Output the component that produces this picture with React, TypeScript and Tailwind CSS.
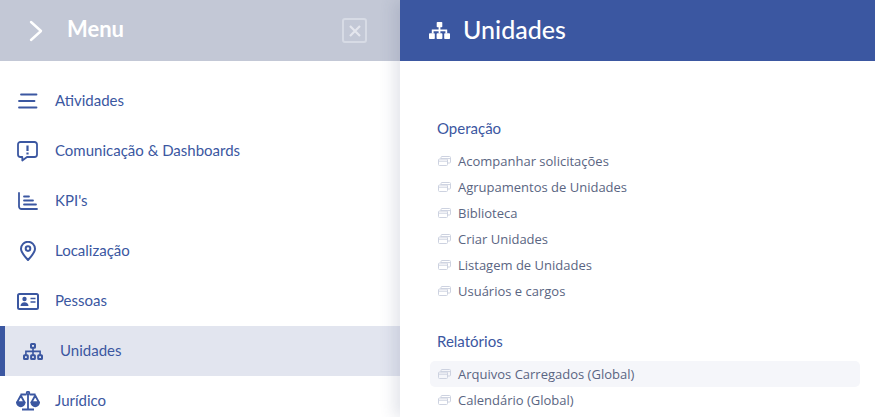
import React from 'react';

const BLUE = '#3b57a1';

const Hierarchy = ({ className }: { className: string }) => (
  <svg viewBox="0 0 20 17" className={className} fill="none" stroke="currentColor" strokeWidth="2">
    <rect x="8" y="1" width="4" height="3.800" rx="0.600" />
    <rect x="1" y="12.200" width="3.800" height="3.800" rx="0.600" />
    <rect x="8.100" y="12.200" width="3.800" height="3.800" rx="0.600" />
    <rect x="15.200" y="12.200" width="3.800" height="3.800" rx="0.600" />
    <path d="M10 4.800V12.200M2.900 12.200V8.400H17.100V12.200" strokeWidth="1.600" />
  </svg>
);

const HierarchySolid = ({ className }: { className: string }) => (
  <svg viewBox="0 0 21 17" className={className} fill="currentColor">
    <rect x="7.700" y="0" width="5.600" height="5.200" rx="0.800" />
    <rect x="0" y="11.300" width="5.800" height="5.700" rx="0.800" />
    <rect x="7.600" y="11.300" width="5.800" height="5.700" rx="0.800" />
    <rect x="15.200" y="11.300" width="5.800" height="5.700" rx="0.800" />
    <path d="M9.600 5h1.800v2.600h6.800v3.900h-1.800V9.300h-5v2.200H9.600V9.300h-5v2.200H2.800V7.600h6.800z" />
  </svg>
);

const ListIcon = () => (
  <svg viewBox="0 0 20 16" className="w-[20px] h-[16px]" fill="none" stroke="currentColor" strokeWidth="1.800" strokeLinecap="round">
    <path d="M3 1.500H18.500M1 8H16.500M1 14.500H18.500" />
  </svg>
);

const AlertIcon = () => (
  <svg viewBox="0 0 21 21" className="w-[21px] h-[21px]" fill="none" stroke="currentColor">
    <path d="M3.500 1h14A2.500 2.500 0 0 1 20 3.500v10a2.500 2.500 0 0 1-2.500 2.500H10l-4.700 3.500V16H3.500A2.500 2.500 0 0 1 1 13.500v-10A2.500 2.500 0 0 1 3.500 1z" strokeWidth="1.800" strokeLinejoin="round" />
    <path d="M10.500 4.500V10" strokeWidth="2.200" />
    <path d="M10.500 11.500V13.500" strokeWidth="2.200" />
  </svg>
);

const ChartIcon = () => (
  <svg viewBox="0 0 20 18" className="w-[20px] h-[18px]" fill="none" stroke="currentColor" strokeWidth="1.800" strokeLinecap="round">
    <path d="M1 1v13.500A2.500 2.500 0 0 0 3.500 17H19" />
    <path d="M6 4.500H11M6 8.500H15M6 12.500H18" />
  </svg>
);

const PinIcon = () => (
  <svg viewBox="0 0 16 20" className="w-[16px] h-[20px]" fill="none" stroke="currentColor" strokeWidth="2">
    <path d="M8 19C4 14.800 1 11.500 1 7.800A7 7 0 0 1 15 7.800C15 11.500 12 14.800 8 19z" strokeLinejoin="round" />
    <circle cx="8" cy="7.600" r="2.300" />
  </svg>
);

const CardIcon = () => (
  <svg viewBox="0 0 22 17" className="w-[22px] h-[17px]" fill="none" stroke="currentColor">
    <rect x="1" y="1" width="20" height="15" rx="1.500" strokeWidth="2" />
    <circle cx="7.500" cy="6" r="2.200" fill="currentColor" stroke="none" />
    <path d="M3.500 13c0-2.500 1.800-3.800 4-3.800s4 1.300 4 3.800z" fill="currentColor" stroke="none" />
    <path d="M13.500 5.500H18.500M13.500 9H18.500" strokeWidth="1.500" />
  </svg>
);

const ScaleIcon = () => (
  <svg viewBox="0 0 24 20" className="w-[24px] h-[20px]" fill="none" stroke="currentColor" strokeWidth="1.800" strokeLinejoin="round">
    <circle cx="12" cy="2" r="1.300" />
    <path d="M12 3.500V18M6 18.500H18M4.500 3.500H10.500M13.500 3.500H19.500" />
    <path d="M4.800 4.500L1 11.500H8.600z" />
    <path d="M19.200 4.500L15.400 11.500H23z" />
    <path d="M1 11.500A3.800 3.800 0 0 0 8.600 11.500zM15.400 11.500A3.800 3.800 0 0 0 23 11.500z" fill="currentColor" />
  </svg>
);

const WindowsIcon = () => (
  <svg viewBox="0 0 13 10" className="w-[13px] h-[10px] shrink-0 text-[#cdd2e0]" fill="none" stroke="currentColor" strokeWidth="1">
    <rect x="0.500" y="3" width="9" height="6.500" rx="1" />
    <path d="M0.500 5.200H9.500" />
    <path d="M3 3V1.500A1 1 0 0 1 4 0.500H11.500A1 1 0 0 1 12.500 1.500V6A1 1 0 0 1 11.500 7H9.500M3 2.600H12.500" />
  </svg>
);

const MENU: { label: string; icon: React.ReactNode; active?: boolean }[] = [
  { label: 'Atividades', icon: <ListIcon /> },
  { label: 'Comunicação & Dashboards', icon: <AlertIcon /> },
  { label: "KPI's", icon: <ChartIcon /> },
  { label: 'Localização', icon: <PinIcon /> },
  { label: 'Pessoas', icon: <CardIcon /> },
  { label: 'Unidades', icon: <Hierarchy className="w-[20px] h-[17px]" />, active: true },
  { label: 'Jurídico', icon: <ScaleIcon /> },
];

const SECTIONS = [
  {
    title: 'Operação',
    items: ['Acompanhar solicitações', 'Agrupamentos de Unidades', 'Biblioteca', 'Criar Unidades', 'Listagem de Unidades', 'Usuários e cargos'],
  },
  {
    title: 'Relatórios',
    items: ['Arquivos Carregados (Global)', 'Calendário (Global)'],
  },
];

const App: React.FC = () => {
  return (
    <div className="flex w-[875px] h-[417px] overflow-hidden bg-white">
      {/* Menu lateral */}
      <aside className="w-[400px] shrink-0 font-['Lato',sans-serif]">
        <header className="h-[61px] bg-[#c3c8d6] flex items-center text-white">
          <svg viewBox="0 0 14 22" className="w-[14px] h-[22px] ml-[29px]" fill="none" stroke="currentColor" strokeWidth="2.400" strokeLinecap="round" strokeLinejoin="round">
            <path d="M2 2L12 11L2 20" />
          </svg>
          <span className="ml-[24px] text-[22px] font-bold leading-none pb-[3px]">Menu</span>
          <div className="ml-auto mr-[33px] w-[25px] h-[25px] rounded-[3px] border-2 border-[#d7dbe5] flex items-center justify-center text-[#e4e6ed]">
            <svg viewBox="0 0 12 12" className="w-[12px] h-[12px]" fill="none" stroke="currentColor" strokeWidth="2.200">
              <path d="M1 1L11 11M11 1L1 11" />
            </svg>
          </div>
        </header>
        <nav className="pt-[15px]">
          {MENU.map(item => (
            <div
              key={item.label}
              className={`h-[50px] flex items-center text-[15px] font-normal text-[#3b57a1] ${item.active ? 'bg-[#e2e5ef] border-l-[5px] border-[#3b57a1]' : ''}`}
            >
              <div className="flex justify-center w-[55px]">{item.icon}</div>
              <span className="pb-[2px]">{item.label}</span>
            </div>
          ))}
        </nav>
      </aside>

      {/* Painel de Unidades */}
      <main className="relative z-10 flex-1 shadow-[-6px_0_14px_rgba(60,70,110,0.14)] bg-white">
        <header className="h-[61px] flex items-center text-white" style={{ backgroundColor: BLUE }}>
          <HierarchySolid className="w-[21px] h-[17px] ml-[29px]" />
          <span className="ml-[13px] text-[25px] font-['Lato',sans-serif] font-medium leading-none pb-[3px]">Unidades</span>
        </header>
        <div className="pt-[55px] px-[30px] pr-[15px]">
          {SECTIONS.map((section, idx) => (
            <section key={section.title} className={idx > 0 ? 'mt-[25px]' : ''}>
              <h3 className="pl-[7px] h-[26px] pb-[2px] flex items-center text-[15px] font-normal font-['Lato',sans-serif] text-[#3b57a1]">{section.title}</h3>
              <ul className="mt-[6px]">
                {section.items.map(name => (
                  <li
                    key={name}
                    className={`h-[26px] rounded-[5px] pl-[8px] flex items-center gap-[7px] text-[13px] font-['Open_Sans',sans-serif] text-[#5a6582] ${name === 'Arquivos Carregados (Global)' ? 'bg-[#f5f6fa]' : ''}`}
                  >
                    <WindowsIcon />
                    <span className="pt-[1px]">{name}</span>
                  </li>
                ))}
              </ul>
            </section>
          ))}
        </div>
      </main>
    </div>
  );
};

export default App;
